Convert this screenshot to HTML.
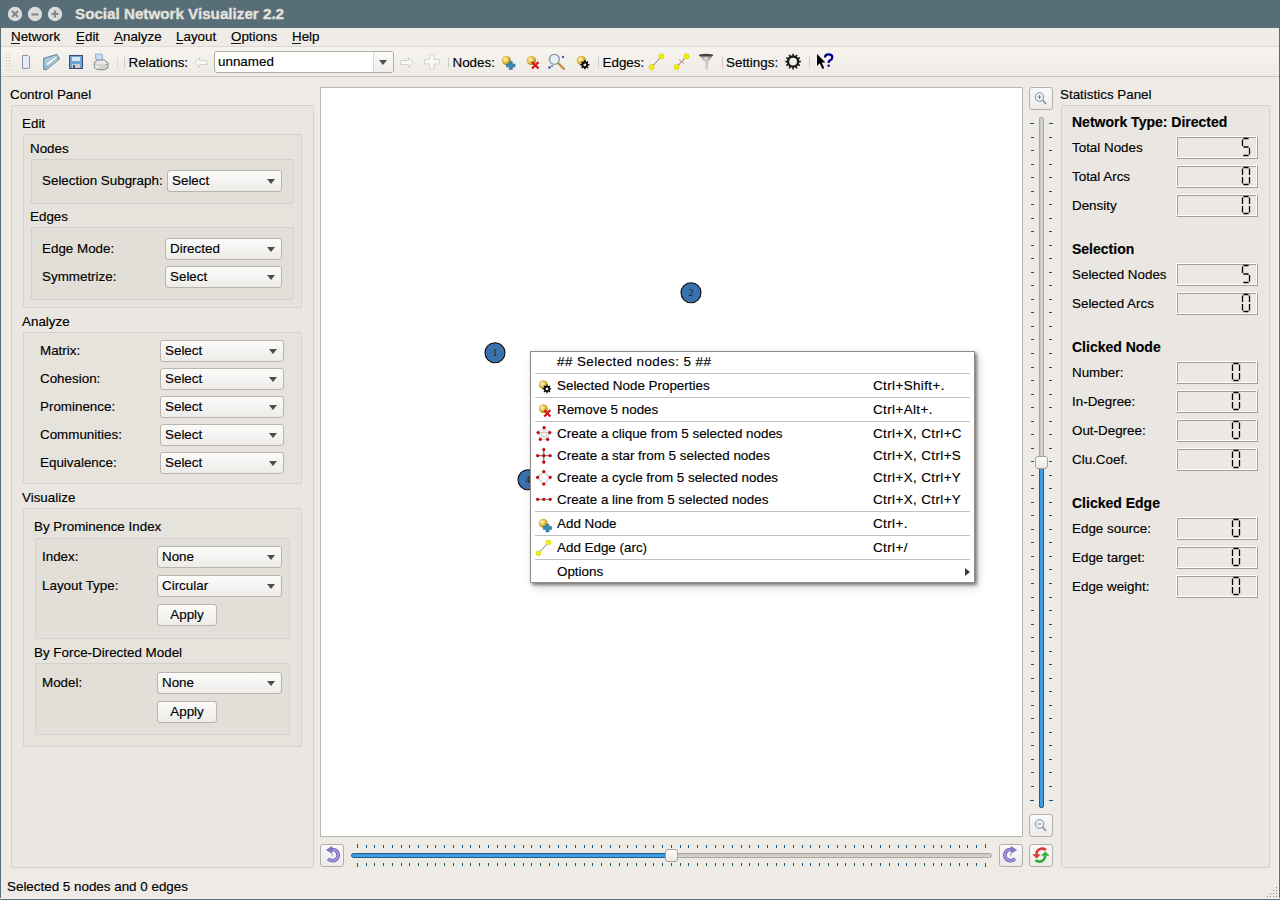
<!DOCTYPE html>
<html><head><meta charset="utf-8">
<style>
*{box-sizing:border-box;margin:0;padding:0}
html,body{width:1280px;height:900px;overflow:hidden}
body{position:relative;background:#eeebe7;font-family:"Liberation Sans",sans-serif;font-size:13.4px;color:#000;-webkit-text-stroke-width:0.15px}
.a{position:absolute}
.t{position:absolute;white-space:nowrap;line-height:16px}
.gb{position:absolute;border:1px solid #d4d0cb;border-radius:2px;background:rgba(60,40,20,0.018)}
.cb{position:absolute;height:22px;border:1px solid #b9b4ae;border-radius:3px;background:linear-gradient(#fbfbfa,#eeece9);padding-left:4px;line-height:19px;white-space:nowrap}
.cb:after{content:"";position:absolute;right:6px;top:8px;border-left:4px solid transparent;border-right:4px solid transparent;border-top:5px solid #4d4d4d}
.btn{position:absolute;height:22px;width:60px;border:1px solid #b9b4ae;border-radius:3px;background:linear-gradient(#fbfbfa,#eeece9);text-align:center;line-height:19px}
.lcd{position:absolute;left:1176px;width:82px;height:23px;border:1px solid;border-color:#fff #a19d98 #a19d98 #fff;box-shadow:inset -1px -1px 0 #fff,inset 1px 1px 0 #a19d98;background:#ece9e5}
.ib{position:absolute;width:24px;height:23px;border:1px solid #b3afa9;border-radius:3px;background:linear-gradient(#fafaf9,#ecebe8)}
</style></head><body>
<!-- title bar -->
<div class="a" style="left:0;top:0;width:1280px;height:28px;background:#576d78"></div>
<div class="t" style="left:75px;top:5px;font-weight:bold;font-size:15.2px;color:#e4e2dc;line-height:18px;-webkit-text-stroke-width:0.35px">Social Network Visualizer 2.2</div>
<!-- window frame -->
<div class="a" style="left:0;top:28px;width:1px;height:872px;background:#576d78"></div>
<div class="a" style="left:1279px;top:28px;width:1px;height:872px;background:#576d78"></div>
<div class="a" style="left:0;top:898px;width:1280px;height:1px;background:#f6f3ef"></div><div class="a" style="left:1278px;top:28px;width:1px;height:871px;background:#f6f3ef"></div><div class="a" style="left:0;top:899px;width:1280px;height:1px;background:#576d78"></div>
<!-- menubar -->
<div class="a" style="left:1px;top:28px;width:1278px;height:18px;background:#efece8"></div>
<div class="a" style="left:1px;top:46px;width:1278px;height:1px;background:#dcd8d3"></div>
<!-- toolbar -->
<div class="a" style="left:1px;top:47px;width:1278px;height:29px;background:linear-gradient(#f7f4f0,#eeebe7)"></div>
<div class="a" style="left:1px;top:76px;width:1278px;height:1px;background:#c9c5c0"></div>

<div id="menu">
<div class="t" style="left:11px;top:29px">Network</div>
<div class="t" style="left:76px;top:29px">Edit</div>
<div class="t" style="left:114px;top:29px">Analyze</div>
<div class="t" style="left:176px;top:29px">Layout</div>
<div class="t" style="left:231px;top:29px">Options</div>
<div class="t" style="left:292px;top:29px">Help</div>
</div>

<!-- control panel -->
<div class="t" style="left:10px;top:87px">Control Panel</div>
<div class="gb" style="left:11px;top:105px;width:303px;height:763px"></div>
<div class="t" style="left:22px;top:116px">Edit</div>
<div class="gb" style="left:23px;top:134px;width:279px;height:174px"></div>
<div class="t" style="left:30px;top:141px">Nodes</div>
<div class="gb" style="left:31px;top:159px;width:263px;height:45px"></div>
<div class="t" style="left:42px;top:173px">Selection Subgraph:</div>
<div class="cb" style="left:167px;top:170px;width:115px">Select</div>
<div class="t" style="left:30px;top:209px">Edges</div>
<div class="gb" style="left:31px;top:227px;width:263px;height:73px"></div>
<div class="t" style="left:42px;top:241px">Edge Mode:</div>
<div class="cb" style="left:165px;top:238px;width:117px">Directed</div>
<div class="t" style="left:42px;top:269px">Symmetrize:</div>
<div class="cb" style="left:165px;top:266px;width:117px">Select</div>

<div class="t" style="left:22px;top:314px">Analyze</div>
<div class="gb" style="left:23px;top:332px;width:279px;height:152px"></div>
<div class="t" style="left:40px;top:343px">Matrix:</div>
<div class="cb" style="left:160px;top:340px;width:124px">Select</div>
<div class="t" style="left:40px;top:371px">Cohesion:</div>
<div class="cb" style="left:160px;top:368px;width:124px">Select</div>
<div class="t" style="left:40px;top:399px">Prominence:</div>
<div class="cb" style="left:160px;top:396px;width:124px">Select</div>
<div class="t" style="left:40px;top:427px">Communities:</div>
<div class="cb" style="left:160px;top:424px;width:124px">Select</div>
<div class="t" style="left:40px;top:455px">Equivalence:</div>
<div class="cb" style="left:160px;top:452px;width:124px">Select</div>

<div class="t" style="left:22px;top:490px">Visualize</div>
<div class="gb" style="left:23px;top:508px;width:279px;height:239px"></div>
<div class="t" style="left:34px;top:519px">By Prominence Index</div>
<div class="gb" style="left:35px;top:538px;width:255px;height:101px"></div>
<div class="t" style="left:42px;top:549px">Index:</div>
<div class="cb" style="left:157px;top:546px;width:125px">None</div>
<div class="t" style="left:42px;top:578px">Layout Type:</div>
<div class="cb" style="left:157px;top:575px;width:125px">Circular</div>
<div class="btn" style="left:157px;top:604px">Apply</div>
<div class="t" style="left:34px;top:645px">By Force-Directed Model</div>
<div class="gb" style="left:35px;top:663px;width:255px;height:72px"></div>
<div class="t" style="left:42px;top:675px">Model:</div>
<div class="cb" style="left:157px;top:672px;width:125px">None</div>
<div class="btn" style="left:157px;top:701px">Apply</div>

<!-- canvas -->
<div class="a" style="left:320px;top:87px;width:703px;height:750px;background:#fff;border:1px solid #b9b5b0"></div>

<!-- statistics panel -->
<div class="t" style="left:1060px;top:87px">Statistics Panel</div>
<div class="gb" style="left:1061px;top:105px;width:209px;height:763px"></div>
<div class="t" style="left:1072px;top:114px;font-weight:bold;font-size:14px">Network Type: Directed</div>
<div class="t" style="left:1072px;top:140px">Total Nodes</div>
<div class="lcd" style="top:136px"></div>
<div class="t" style="left:1072px;top:169px">Total Arcs</div>
<div class="lcd" style="top:165px"></div>
<div class="t" style="left:1072px;top:198px">Density</div>
<div class="lcd" style="top:194px"></div>
<div class="t" style="left:1072px;top:241px;font-weight:bold;font-size:14px">Selection</div>
<div class="t" style="left:1072px;top:267px">Selected Nodes</div>
<div class="lcd" style="top:263px"></div>
<div class="t" style="left:1072px;top:296px">Selected Arcs</div>
<div class="lcd" style="top:292px"></div>
<div class="t" style="left:1072px;top:339px;font-weight:bold;font-size:14px">Clicked Node</div>
<div class="t" style="left:1072px;top:365px">Number:</div>
<div class="lcd" style="top:361px"></div>
<div class="t" style="left:1072px;top:394px">In-Degree:</div>
<div class="lcd" style="top:390px"></div>
<div class="t" style="left:1072px;top:423px">Out-Degree:</div>
<div class="lcd" style="top:419px"></div>
<div class="t" style="left:1072px;top:452px">Clu.Coef.</div>
<div class="lcd" style="top:448px"></div>
<div class="t" style="left:1072px;top:495px;font-weight:bold;font-size:14px">Clicked Edge</div>
<div class="t" style="left:1072px;top:521px">Edge source:</div>
<div class="lcd" style="top:517px"></div>
<div class="t" style="left:1072px;top:550px">Edge target:</div>
<div class="lcd" style="top:546px"></div>
<div class="t" style="left:1072px;top:579px">Edge weight:</div>
<div class="lcd" style="top:575px"></div>

<!-- status -->
<div class="t" style="left:7px;top:879px">Selected 5 nodes and 0 edges</div>


<!-- title buttons -->
<svg class="a" style="left:0;top:0" width="70" height="28">
 <g fill="#dcdcdc"><circle cx="15" cy="14" r="7.2"/><circle cx="35" cy="14" r="7.2"/><circle cx="55" cy="14" r="7.2"/></g>
 <g stroke="#858585" stroke-width="2.1" fill="none"><path d="M12 11 L18 17 M18 11 L12 17"/><path d="M31.5 14.5 H38.5"/><path d="M55 10.5 V17.5 M51.5 14 H58.5"/></g>
</svg>
<!-- toolbar -->
<svg class="a" style="left:0;top:47px" width="1280" height="29">
 <g fill="#c4c0bb"><rect x="6" y="7" width="1" height="1"/><rect x="6" y="10" width="1" height="1"/><rect x="6" y="13" width="1" height="1"/><rect x="6" y="16" width="1" height="1"/><rect x="6" y="19" width="1" height="1"/><rect x="6" y="22" width="1" height="1"/>
 <rect x="9" y="7" width="1" height="1"/><rect x="9" y="10" width="1" height="1"/><rect x="9" y="13" width="1" height="1"/><rect x="9" y="16" width="1" height="1"/><rect x="9" y="19" width="1" height="1"/><rect x="9" y="22" width="1" height="1"/></g>
 <!-- new doc -->
 <path d="M22.5 8.5 H28 L29.5 10 V21 L22.5 21.8 Z" fill="#e6ecfa" stroke="#8d949c"/>
 <!-- open folder -->
 <path d="M43.6 11.3 L56.8 7.4 L58.8 10.3 L59 12.3 L46 22.8 L43.8 22.4 Z" fill="#9ccbe4" stroke="#5b6f7a" stroke-width="0.9"/>
 <path d="M46.3 16.2 L56 9.6 L57.8 10.9 L47.3 19.2 Z" fill="#f6f7f8" stroke="#9aa" stroke-width="0.4"/>
 <path d="M44.6 21.8 L55.5 12.8 L58.8 10.8 L58.9 12.4 L46 22.8 Z" fill="#b3def2" stroke="#5b6f7a" stroke-width="0.6"/>
 <!-- save -->
 <rect x="69.5" y="8.5" width="13" height="13" fill="#6fa3d8" stroke="#3a4a7a"/>
 <rect x="72" y="10" width="8" height="4" fill="#d9e8ea"/>
 <rect x="72" y="17" width="8" height="4" fill="#d0d0d0"/><rect x="73" y="18" width="2" height="3" fill="#555"/>
 <!-- print -->
 <path d="M95.3 7.2 H102 L102.8 13.2 H96 Z" fill="#c6dcfa" stroke="#8c9cc8" stroke-width="0.8"/>
 <path d="M94.3 15.5 L97.5 13 H104.5 L108 15.8 V20.8 L104.5 22.8 H98 L94.3 20.5 Z" fill="#d2d2d2" stroke="#7c7c7c" stroke-width="0.9"/>
 <path d="M95.5 15.6 L98 13.8 H104.2 L106.8 16 V17.3 H95.5 Z" fill="#e8e8e8"/>
 <rect x="95.3" y="19" width="4" height="1.6" fill="#fafafa"/>
 <circle cx="106" cy="17.5" r="0.8" fill="#5cb85c"/>
 <!-- separators -->
 <rect x="117" y="10" width="1" height="11" fill="#dcd9d5"/><rect x="124" y="10" width="1" height="11" fill="#d0ccc7"/>
 <!-- back arrow disabled -->
 <path d="M194.5 15.5 L199.5 10.5 V13.5 H207 V17.5 H199.5 V20.5 Z" fill="#f7f7f7" stroke="#cfcfcf"/>
 <!-- forward arrow disabled -->
 <path d="M413.5 15.5 L408.5 10.5 V13.5 H400.5 V17.5 H408.5 V20.5 Z" fill="#f7f7f7" stroke="#cfcfcf"/>
 <!-- plus disabled -->
 <path d="M429.5 7.5 H434 V12.5 H439.5 V17 H434 V22 H429.5 V17 H424.5 V12.5 H429.5 Z" fill="#f7f7f7" stroke="#d4d4d4"/>
 <rect x="448" y="10" width="1" height="11" fill="#d0ccc7"/>
 <!-- add node -->
 <defs><radialGradient id="ball" cx="0.4" cy="0.4" r="0.6"><stop offset="0" stop-color="#fffbe0"/><stop offset="0.4" stop-color="#ecd060"/><stop offset="0.85" stop-color="#c89a20"/><stop offset="1" stop-color="#9c7410"/></radialGradient>
 <linearGradient id="funnel" x1="0" x2="1"><stop offset="0" stop-color="#7a7a7a"/><stop offset="0.5" stop-color="#d8d8d8"/><stop offset="1" stop-color="#6a6a6a"/></linearGradient></defs>
 <circle cx="506.3" cy="13.5" r="4.6" fill="url(#ball)"/>
 <path d="M509.3 14.5 H512.3 V17 H515 V20 H512.3 V22.5 H509.3 V20 H506.5 V17 H509.3 Z" fill="#3a8ab8" stroke="#2a6a90" stroke-width="0.6"/>
 <!-- remove node -->
 <circle cx="531.3" cy="13.5" r="4.6" fill="url(#ball)"/>
 <path d="M532 15 L538.5 21.5 M538.5 15 L532 21.5" stroke="#d81818" stroke-width="2.4"/>
 <!-- find node -->
 <circle cx="554.4" cy="12.3" r="5" fill="#e4eef4" stroke="#8c98a4" stroke-width="1.3"/>
 <path d="M558.5 16.5 L564 22" stroke="#c09040" stroke-width="2.4" stroke-linecap="round"/>
 <circle cx="549.5" cy="20.5" r="1.3" fill="#3a5ab0"/><circle cx="552" cy="19" r="0.9" fill="#3a5ab0"/><circle cx="563" cy="10" r="1.2" fill="#3a5ab0"/>
 <!-- node properties -->
 <circle cx="581.3" cy="13.5" r="4.6" fill="url(#ball)"/>
 <path d="M588.02 17.09 L589.34 17.06 L589.34 18.54 L588.02 18.51 L587.58 19.58 L588.53 20.49 L587.49 21.53 L586.58 20.58 L585.51 21.02 L585.54 22.34 L584.06 22.34 L584.09 21.02 L583.02 20.58 L582.11 21.53 L581.07 20.49 L582.02 19.58 L581.58 18.51 L580.26 18.54 L580.26 17.06 L581.58 17.09 L582.02 16.02 L581.07 15.11 L582.11 14.07 L583.02 15.02 L584.09 14.58 L584.06 13.26 L585.54 13.26 L585.51 14.58 L586.58 15.02 L587.49 14.07 L588.53 15.11 L587.58 16.02 Z M586.30 17.80 A1.5 1.5 0 1 0 583.30 17.80 A1.5 1.5 0 1 0 586.30 17.80 Z" fill="#000" fill-rule="evenodd"/>
 <rect x="598" y="10" width="1" height="11" fill="#d0ccc7"/>
 <!-- add edge -->
 <path d="M651.6 20.1 L661.5 9.4" stroke="#444" stroke-width="1" stroke-dasharray="2 1"/>
 <circle cx="651.6" cy="20.1" r="2.6" fill="#f4f000" stroke="#c8c000" stroke-width="0.5"/><circle cx="661.5" cy="9.4" r="2.6" fill="#f4f000" stroke="#c8c000" stroke-width="0.5"/>
 <!-- remove edge -->
 <path d="M676.6 20.1 L686.5 9.4" stroke="#444" stroke-width="1" stroke-dasharray="2 1"/>
 <path d="M679 12.5 L684 16.5" stroke="#f05050" stroke-width="0.8"/>
 <circle cx="676.6" cy="20.1" r="2.6" fill="#f4f000" stroke="#c8c000" stroke-width="0.5"/><circle cx="686.5" cy="9.4" r="2.6" fill="#f4f000" stroke="#c8c000" stroke-width="0.5"/>
 <!-- funnel -->
 <path d="M698.8 8 Q706 6 713.3 8 L708 15 V21.5 L705 22.5 V15 Z" fill="url(#funnel)"/>
 <ellipse cx="706" cy="8.2" rx="7.2" ry="1.4" fill="#444"/>
 <rect x="722" y="10" width="1" height="11" fill="#d0ccc7"/>
 <!-- gear -->
 <path d="M799.25 13.79 L800.96 13.83 L800.96 15.37 L799.25 15.41 L798.83 16.97 L800.30 17.86 L799.52 19.20 L798.02 18.37 L796.87 19.52 L797.70 21.02 L796.36 21.80 L795.47 20.33 L793.91 20.75 L793.87 22.46 L792.33 22.46 L792.29 20.75 L790.73 20.33 L789.84 21.80 L788.50 21.02 L789.33 19.52 L788.18 18.37 L786.68 19.20 L785.90 17.86 L787.37 16.97 L786.95 15.41 L785.24 15.37 L785.24 13.83 L786.95 13.79 L787.37 12.23 L785.90 11.34 L786.68 10.00 L788.18 10.83 L789.33 9.68 L788.50 8.18 L789.84 7.40 L790.73 8.87 L792.29 8.45 L792.33 6.74 L793.87 6.74 L793.91 8.45 L795.47 8.87 L796.36 7.40 L797.70 8.18 L796.87 9.68 L798.02 10.83 L799.52 10.00 L800.30 11.34 L798.83 12.23 Z M797.00 14.60 A3.9 3.9 0 1 0 789.20 14.60 A3.9 3.9 0 1 0 797.00 14.60 Z" fill="#1a1a1a" fill-rule="evenodd"/>
 <rect x="809" y="10" width="1" height="11" fill="#d0ccc7"/>
 <!-- whats this -->
 <path d="M817 7 V19 L819.8 16.3 L822.3 22 L824.2 21.1 L821.8 15.6 H825.5 Z" fill="#000"/>
 <path d="M825 10.5 Q825 7.3 828.5 7.3 Q832.3 7.3 832.3 10.3 Q832.3 12.3 829.8 13.5 Q828.6 14.2 828.6 16" fill="none" stroke="#00008b" stroke-width="2.2"/>
 <rect x="827.4" y="17.7" width="2.4" height="2" fill="#00008b"/>
</svg>
<div class="t" style="left:128.5px;top:54.5px">Relations:</div>
<div class="a" style="left:214px;top:51px;width:180px;height:22px;border:1px solid #b2ada7;border-radius:3px;background:#fff"></div>
<div class="a" style="left:373px;top:52px;width:1px;height:20px;background:#d8d4cf"></div>
<div class="a" style="left:374px;top:52px;width:19px;height:20px;background:linear-gradient(#fbfbfa,#efedea);border-radius:0 2px 2px 0"></div>
<div class="a" style="left:379px;top:60px;border-left:4px solid transparent;border-right:4px solid transparent;border-top:5px solid #4d4d4d"></div>
<div class="t" style="left:218px;top:54px">unnamed</div>
<div class="t" style="left:452.5px;top:54.5px">Nodes:</div>
<div class="t" style="left:602.5px;top:54.5px">Edges:</div>
<div class="t" style="left:726px;top:54.5px">Settings:</div>

<!-- canvas nodes -->
<svg class="a" style="left:321px;top:88px" width="701" height="748">
 <g fill="#3a72ae" stroke="#0a0a0a" stroke-width="1.1">
 <circle cx="174" cy="264.8" r="10"/><circle cx="370" cy="204.8" r="10"/><circle cx="207" cy="391.8" r="10"/></g>
 <g font-family="Liberation Serif" font-size="10" fill="#222" text-anchor="middle"><text x="174" y="268.3">1</text><text x="370" y="208.3">2</text><text x="207" y="395.3">4</text></g>
</svg>
<!-- vertical slider -->
<div class="ib" style="left:1029px;top:87px"></div>
<svg class="a" style="left:1029px;top:87px" width="23" height="23"><circle cx="10.5" cy="10" r="4.3" fill="#eef4fa" stroke="#7a8ca0" stroke-width="1"/><path d="M10.5 8 V12 M8.5 10 H12.5" stroke="#6a7c90" stroke-width="0.9"/><path d="M13.5 13 L17 17" stroke="#8a8a8a" stroke-width="1.5"/></svg>
<div class="ib" style="left:1029px;top:814px"></div>
<svg class="a" style="left:1029px;top:814px" width="23" height="23"><circle cx="10.5" cy="10" r="4.3" fill="#eef4fa" stroke="#7a8ca0" stroke-width="1"/><path d="M8.5 10 H12.5" stroke="#6a7c90" stroke-width="0.9"/><path d="M13.5 13 L17 17" stroke="#8a8a8a" stroke-width="1.5"/></svg>
<svg class="a" style="left:1030px;top:0" width="24" height="900" fill="#17557f"><rect x="0" y="123" width="4" height="1"/><rect x="19" y="123" width="4" height="1"/><rect x="1" y="137" width="3" height="1"/><rect x="19" y="137" width="3" height="1"/><rect x="1" y="150" width="3" height="1"/><rect x="19" y="150" width="3" height="1"/><rect x="1" y="164" width="3" height="1"/><rect x="19" y="164" width="3" height="1"/><rect x="1" y="177" width="3" height="1"/><rect x="19" y="177" width="3" height="1"/><rect x="1" y="191" width="3" height="1"/><rect x="19" y="191" width="3" height="1"/><rect x="1" y="204" width="3" height="1"/><rect x="19" y="204" width="3" height="1"/><rect x="1" y="218" width="3" height="1"/><rect x="19" y="218" width="3" height="1"/><rect x="1" y="231" width="3" height="1"/><rect x="19" y="231" width="3" height="1"/><rect x="1" y="245" width="3" height="1"/><rect x="19" y="245" width="3" height="1"/><rect x="1" y="258" width="3" height="1"/><rect x="19" y="258" width="3" height="1"/><rect x="1" y="272" width="3" height="1"/><rect x="19" y="272" width="3" height="1"/><rect x="1" y="285" width="3" height="1"/><rect x="19" y="285" width="3" height="1"/><rect x="1" y="299" width="3" height="1"/><rect x="19" y="299" width="3" height="1"/><rect x="1" y="312" width="3" height="1"/><rect x="19" y="312" width="3" height="1"/><rect x="1" y="326" width="3" height="1"/><rect x="19" y="326" width="3" height="1"/><rect x="1" y="339" width="3" height="1"/><rect x="19" y="339" width="3" height="1"/><rect x="1" y="353" width="3" height="1"/><rect x="19" y="353" width="3" height="1"/><rect x="1" y="367" width="3" height="1"/><rect x="19" y="367" width="3" height="1"/><rect x="1" y="380" width="3" height="1"/><rect x="19" y="380" width="3" height="1"/><rect x="1" y="394" width="3" height="1"/><rect x="19" y="394" width="3" height="1"/><rect x="1" y="407" width="3" height="1"/><rect x="19" y="407" width="3" height="1"/><rect x="1" y="421" width="3" height="1"/><rect x="19" y="421" width="3" height="1"/><rect x="1" y="434" width="3" height="1"/><rect x="19" y="434" width="3" height="1"/><rect x="1" y="448" width="3" height="1"/><rect x="19" y="448" width="3" height="1"/><rect x="1" y="461" width="3" height="1"/><rect x="19" y="461" width="3" height="1"/><rect x="1" y="475" width="3" height="1"/><rect x="19" y="475" width="3" height="1"/><rect x="1" y="488" width="3" height="1"/><rect x="19" y="488" width="3" height="1"/><rect x="1" y="502" width="3" height="1"/><rect x="19" y="502" width="3" height="1"/><rect x="1" y="515" width="3" height="1"/><rect x="19" y="515" width="3" height="1"/><rect x="1" y="529" width="3" height="1"/><rect x="19" y="529" width="3" height="1"/><rect x="1" y="542" width="3" height="1"/><rect x="19" y="542" width="3" height="1"/><rect x="1" y="556" width="3" height="1"/><rect x="19" y="556" width="3" height="1"/><rect x="1" y="569" width="3" height="1"/><rect x="19" y="569" width="3" height="1"/><rect x="1" y="583" width="3" height="1"/><rect x="19" y="583" width="3" height="1"/><rect x="1" y="597" width="3" height="1"/><rect x="19" y="597" width="3" height="1"/><rect x="1" y="610" width="3" height="1"/><rect x="19" y="610" width="3" height="1"/><rect x="1" y="624" width="3" height="1"/><rect x="19" y="624" width="3" height="1"/><rect x="1" y="637" width="3" height="1"/><rect x="19" y="637" width="3" height="1"/><rect x="1" y="651" width="3" height="1"/><rect x="19" y="651" width="3" height="1"/><rect x="1" y="664" width="3" height="1"/><rect x="19" y="664" width="3" height="1"/><rect x="1" y="678" width="3" height="1"/><rect x="19" y="678" width="3" height="1"/><rect x="1" y="691" width="3" height="1"/><rect x="19" y="691" width="3" height="1"/><rect x="1" y="705" width="3" height="1"/><rect x="19" y="705" width="3" height="1"/><rect x="1" y="718" width="3" height="1"/><rect x="19" y="718" width="3" height="1"/><rect x="1" y="732" width="3" height="1"/><rect x="19" y="732" width="3" height="1"/><rect x="1" y="745" width="3" height="1"/><rect x="19" y="745" width="3" height="1"/><rect x="1" y="759" width="3" height="1"/><rect x="19" y="759" width="3" height="1"/><rect x="1" y="772" width="3" height="1"/><rect x="19" y="772" width="3" height="1"/><rect x="1" y="786" width="3" height="1"/><rect x="19" y="786" width="3" height="1"/><rect x="0" y="800" width="4" height="1"/><rect x="19" y="800" width="4" height="1"/></svg>
<div class="a" style="left:1039px;top:117px;width:5px;height:345px;background:linear-gradient(90deg,#c8c4bf,#dcd9d5);border:1px solid #a9a5a0;border-radius:2px 2px 0 0"></div>
<div class="a" style="left:1039px;top:462px;width:5px;height:346px;background:#3f9de0;border:1px solid #1f5d8c;border-radius:0 0 2px 2px"></div>
<div class="a" style="left:1035px;top:456px;width:13px;height:13px;border:1px solid #a7a29c;border-radius:3px;background:linear-gradient(#ffffff,#e9e7e4)"></div>
<!-- horizontal slider -->
<div class="ib" style="left:320px;top:844px"></div>
<div class="ib" style="left:999px;top:844px"></div>
<div class="ib" style="left:1029px;top:844px"></div>
<svg class="a" style="left:320.5px;top:844px" width="23" height="23"><path d="M10.3 5.6 A5.6 5.6 0 1 1 7.2 14.6" fill="none" stroke="#6a58b0" stroke-width="3.6"/><path d="M10.3 5.6 A5.6 5.6 0 1 1 7.2 14.6" fill="none" stroke="#a898e0" stroke-width="2"/><path d="M10.8 2.5 L5.5 6 L10.8 9.3 Z" fill="#8c78d0" stroke="#6a58b0" stroke-width="0.6"/><circle cx="11.3" cy="10.8" r="0.8" fill="#8c78d0"/></svg>
<svg class="a" style="left:999px;top:844px" width="23" height="23"><path d="M12.7 5.6 A5.6 5.6 0 1 0 15.8 14.6" fill="none" stroke="#6a58b0" stroke-width="3.6"/><path d="M12.7 5.6 A5.6 5.6 0 1 0 15.8 14.6" fill="none" stroke="#a898e0" stroke-width="2"/><path d="M12.2 2.5 L17.5 6 L12.2 9.3 Z" fill="#8c78d0" stroke="#6a58b0" stroke-width="0.6"/><circle cx="11.7" cy="10.8" r="0.8" fill="#8c78d0"/></svg>
<svg class="a" style="left:1029px;top:844px" width="23" height="23">
 <path d="M17 5.8 Q12.5 3.2 9 6.2 Q7.3 8 7.5 10.5" fill="none" stroke="#d83a3a" stroke-width="2.6"/><path d="M3.3 10.3 L11.8 10.3 L7.6 14.6 Z" fill="#d83a3a"/>
 <path d="M6.5 16.3 Q11 19 14.5 16 Q16.3 14 16.2 11.5" fill="none" stroke="#30b030" stroke-width="2.6"/><path d="M12 11.8 L20.5 11.8 L16.3 7.4 Z" fill="#30b030"/>
</svg>
<svg class="a" style="left:0;top:844px" width="1280" height="24" fill="#17557f"><rect x="357" y="0" width="1" height="4"/><rect x="366" y="1" width="1" height="3"/><rect x="374" y="1" width="1" height="3"/><rect x="383" y="1" width="1" height="3"/><rect x="392" y="1" width="1" height="3"/><rect x="401" y="1" width="1" height="3"/><rect x="409" y="1" width="1" height="3"/><rect x="418" y="1" width="1" height="3"/><rect x="427" y="1" width="1" height="3"/><rect x="435" y="1" width="1" height="3"/><rect x="444" y="1" width="1" height="3"/><rect x="453" y="1" width="1" height="3"/><rect x="462" y="1" width="1" height="3"/><rect x="470" y="1" width="1" height="3"/><rect x="479" y="1" width="1" height="3"/><rect x="488" y="1" width="1" height="3"/><rect x="497" y="1" width="1" height="3"/><rect x="505" y="1" width="1" height="3"/><rect x="514" y="1" width="1" height="3"/><rect x="523" y="1" width="1" height="3"/><rect x="531" y="1" width="1" height="3"/><rect x="540" y="1" width="1" height="3"/><rect x="549" y="1" width="1" height="3"/><rect x="558" y="1" width="1" height="3"/><rect x="566" y="1" width="1" height="3"/><rect x="575" y="1" width="1" height="3"/><rect x="584" y="1" width="1" height="3"/><rect x="592" y="1" width="1" height="3"/><rect x="601" y="1" width="1" height="3"/><rect x="610" y="1" width="1" height="3"/><rect x="619" y="1" width="1" height="3"/><rect x="627" y="1" width="1" height="3"/><rect x="636" y="1" width="1" height="3"/><rect x="645" y="1" width="1" height="3"/><rect x="653" y="1" width="1" height="3"/><rect x="662" y="1" width="1" height="3"/><rect x="671" y="1" width="1" height="3"/><rect x="680" y="1" width="1" height="3"/><rect x="688" y="1" width="1" height="3"/><rect x="697" y="1" width="1" height="3"/><rect x="706" y="1" width="1" height="3"/><rect x="715" y="1" width="1" height="3"/><rect x="723" y="1" width="1" height="3"/><rect x="732" y="1" width="1" height="3"/><rect x="741" y="1" width="1" height="3"/><rect x="749" y="1" width="1" height="3"/><rect x="758" y="1" width="1" height="3"/><rect x="767" y="1" width="1" height="3"/><rect x="776" y="1" width="1" height="3"/><rect x="784" y="1" width="1" height="3"/><rect x="793" y="1" width="1" height="3"/><rect x="802" y="1" width="1" height="3"/><rect x="810" y="1" width="1" height="3"/><rect x="819" y="1" width="1" height="3"/><rect x="828" y="1" width="1" height="3"/><rect x="837" y="1" width="1" height="3"/><rect x="845" y="1" width="1" height="3"/><rect x="854" y="1" width="1" height="3"/><rect x="863" y="1" width="1" height="3"/><rect x="871" y="1" width="1" height="3"/><rect x="880" y="1" width="1" height="3"/><rect x="889" y="1" width="1" height="3"/><rect x="898" y="1" width="1" height="3"/><rect x="906" y="1" width="1" height="3"/><rect x="915" y="1" width="1" height="3"/><rect x="924" y="1" width="1" height="3"/><rect x="933" y="1" width="1" height="3"/><rect x="941" y="1" width="1" height="3"/><rect x="950" y="1" width="1" height="3"/><rect x="959" y="1" width="1" height="3"/><rect x="967" y="1" width="1" height="3"/><rect x="976" y="1" width="1" height="3"/><rect x="985" y="0" width="1" height="4"/><rect x="357" y="19" width="1" height="4"/><rect x="366" y="19" width="1" height="3"/><rect x="374" y="19" width="1" height="3"/><rect x="383" y="19" width="1" height="3"/><rect x="392" y="19" width="1" height="3"/><rect x="401" y="19" width="1" height="3"/><rect x="409" y="19" width="1" height="3"/><rect x="418" y="19" width="1" height="3"/><rect x="427" y="19" width="1" height="3"/><rect x="435" y="19" width="1" height="3"/><rect x="444" y="19" width="1" height="3"/><rect x="453" y="19" width="1" height="3"/><rect x="462" y="19" width="1" height="3"/><rect x="470" y="19" width="1" height="3"/><rect x="479" y="19" width="1" height="3"/><rect x="488" y="19" width="1" height="3"/><rect x="497" y="19" width="1" height="3"/><rect x="505" y="19" width="1" height="3"/><rect x="514" y="19" width="1" height="3"/><rect x="523" y="19" width="1" height="3"/><rect x="531" y="19" width="1" height="3"/><rect x="540" y="19" width="1" height="3"/><rect x="549" y="19" width="1" height="3"/><rect x="558" y="19" width="1" height="3"/><rect x="566" y="19" width="1" height="3"/><rect x="575" y="19" width="1" height="3"/><rect x="584" y="19" width="1" height="3"/><rect x="592" y="19" width="1" height="3"/><rect x="601" y="19" width="1" height="3"/><rect x="610" y="19" width="1" height="3"/><rect x="619" y="19" width="1" height="3"/><rect x="627" y="19" width="1" height="3"/><rect x="636" y="19" width="1" height="3"/><rect x="645" y="19" width="1" height="3"/><rect x="653" y="19" width="1" height="3"/><rect x="662" y="19" width="1" height="3"/><rect x="671" y="19" width="1" height="3"/><rect x="680" y="19" width="1" height="3"/><rect x="688" y="19" width="1" height="3"/><rect x="697" y="19" width="1" height="3"/><rect x="706" y="19" width="1" height="3"/><rect x="715" y="19" width="1" height="3"/><rect x="723" y="19" width="1" height="3"/><rect x="732" y="19" width="1" height="3"/><rect x="741" y="19" width="1" height="3"/><rect x="749" y="19" width="1" height="3"/><rect x="758" y="19" width="1" height="3"/><rect x="767" y="19" width="1" height="3"/><rect x="776" y="19" width="1" height="3"/><rect x="784" y="19" width="1" height="3"/><rect x="793" y="19" width="1" height="3"/><rect x="802" y="19" width="1" height="3"/><rect x="810" y="19" width="1" height="3"/><rect x="819" y="19" width="1" height="3"/><rect x="828" y="19" width="1" height="3"/><rect x="837" y="19" width="1" height="3"/><rect x="845" y="19" width="1" height="3"/><rect x="854" y="19" width="1" height="3"/><rect x="863" y="19" width="1" height="3"/><rect x="871" y="19" width="1" height="3"/><rect x="880" y="19" width="1" height="3"/><rect x="889" y="19" width="1" height="3"/><rect x="898" y="19" width="1" height="3"/><rect x="906" y="19" width="1" height="3"/><rect x="915" y="19" width="1" height="3"/><rect x="924" y="19" width="1" height="3"/><rect x="933" y="19" width="1" height="3"/><rect x="941" y="19" width="1" height="3"/><rect x="950" y="19" width="1" height="3"/><rect x="959" y="19" width="1" height="3"/><rect x="967" y="19" width="1" height="3"/><rect x="976" y="19" width="1" height="3"/><rect x="985" y="19" width="1" height="4"/></svg>
<div class="a" style="left:351px;top:853px;width:320px;height:5px;background:#3f9de0;border:1px solid #1f5d8c;border-radius:3px 0 0 3px"></div>
<div class="a" style="left:671px;top:853px;width:321px;height:5px;background:linear-gradient(#c8c4bf,#dcd9d5);border:1px solid #a9a5a0;border-radius:0 3px 3px 0"></div>
<div class="a" style="left:665px;top:849px;width:13px;height:13px;border:1px solid #a7a29c;border-radius:3px;background:linear-gradient(#ffffff,#e9e7e4)"></div>

<!-- context menu -->
<div class="a" style="left:530px;top:351px;width:445px;height:232px;box-shadow:2px 2px 3px rgba(0,0,0,0.45),3px 4px 9px rgba(0,0,0,0.18)"></div>
<div class="a" style="left:530px;top:351px;width:445px;height:232px;background:#fff;border:1px solid #8f8b86"></div>
<div class="a" style="left:535px;top:373px;width:435px;height:1px;background:#c2c2c2"></div>
<div class="a" style="left:535px;top:397px;width:435px;height:1px;background:#c2c2c2"></div>
<div class="a" style="left:535px;top:421px;width:435px;height:1px;background:#c2c2c2"></div>
<div class="a" style="left:535px;top:511px;width:435px;height:1px;background:#c2c2c2"></div>
<div class="a" style="left:535px;top:535px;width:435px;height:1px;background:#c2c2c2"></div>
<div class="a" style="left:535px;top:559px;width:435px;height:1px;background:#c2c2c2"></div>
<div class="t" style="left:557px;top:354px;letter-spacing:0.43px">## Selected nodes: 5 ##</div>
<div class="t" style="left:557px;top:378px">Selected Node Properties</div>
<div class="t" style="left:873px;top:378px;letter-spacing:0.4px">Ctrl+Shift+.</div>
<div class="t" style="left:557px;top:402px">Remove 5 nodes</div>
<div class="t" style="left:873px;top:402px;letter-spacing:0.4px">Ctrl+Alt+.</div>
<div class="t" style="left:557px;top:426px">Create a clique from 5 selected nodes</div>
<div class="t" style="left:873px;top:426px;letter-spacing:0.4px">Ctrl+X, Ctrl+C</div>
<div class="t" style="left:557px;top:448px">Create a star from 5 selected nodes</div>
<div class="t" style="left:873px;top:448px;letter-spacing:0.4px">Ctrl+X, Ctrl+S</div>
<div class="t" style="left:557px;top:470px">Create a cycle from 5 selected nodes</div>
<div class="t" style="left:873px;top:470px;letter-spacing:0.4px">Ctrl+X, Ctrl+Y</div>
<div class="t" style="left:557px;top:492px">Create a line from 5 selected nodes</div>
<div class="t" style="left:873px;top:492px;letter-spacing:0.4px">Ctrl+X, Ctrl+Y</div>
<div class="t" style="left:557px;top:516px">Add Node</div>
<div class="t" style="left:873px;top:516px;letter-spacing:0.4px">Ctrl+.</div>
<div class="t" style="left:557px;top:540px">Add Edge (arc)</div>
<div class="t" style="left:873px;top:540px;letter-spacing:0.4px">Ctrl+/</div>
<div class="t" style="left:557px;top:564px">Options</div>
<div class="a" style="left:965px;top:568px;border-top:4.5px solid transparent;border-bottom:4.5px solid transparent;border-left:5px solid #3a3a3a"></div>
<svg class="a" style="left:530px;top:351px" width="30" height="232">
 <defs><radialGradient id="ball2" cx="0.4" cy="0.4" r="0.6"><stop offset="0" stop-color="#fffbe0"/><stop offset="0.4" stop-color="#ecd060"/><stop offset="0.85" stop-color="#c89a20"/><stop offset="1" stop-color="#9c7410"/></radialGradient></defs>
 <circle cx="13.3" cy="33.7" r="4.4" fill="url(#ball2)"/>
 <path d="M20.03 37.24 L21.24 37.21 L21.24 38.59 L20.03 38.56 L19.61 39.57 L20.49 40.41 L19.51 41.39 L18.67 40.51 L17.66 40.93 L17.69 42.14 L16.31 42.14 L16.34 40.93 L15.33 40.51 L14.49 41.39 L13.51 40.41 L14.39 39.57 L13.97 38.56 L12.76 38.59 L12.76 37.21 L13.97 37.24 L14.39 36.23 L13.51 35.39 L14.49 34.41 L15.33 35.29 L16.34 34.87 L16.31 33.66 L17.69 33.66 L17.66 34.87 L18.67 35.29 L19.51 34.41 L20.49 35.39 L19.61 36.23 Z M18.40 37.90 A1.4 1.4 0 1 0 15.60 37.90 A1.4 1.4 0 1 0 18.40 37.90 Z" fill="#000" fill-rule="evenodd"/>
 <circle cx="13.3" cy="57.6" r="4.4" fill="url(#ball2)"/>
 <path d="M14.3 59 L20.3 65.5 M20.3 59 L14.3 65.5" stroke="#d81818" stroke-width="2.3"/>
 <!-- clique -->
 <g stroke="#b8b8b8" stroke-width="0.7" fill="none"><path d="M14.1 76.6 L19.8 81.6 L17.7 88.4 L10.3 88.4 L8.1 81.6 Z M14.1 76.6 L17.7 88.4 L8.1 81.6 L19.8 81.6 L10.3 88.4 Z"/></g>
 <g fill="#e00000" stroke="#800" stroke-width="0.4"><circle cx="14.1" cy="76.6" r="1.4"/><circle cx="8.1" cy="81.6" r="1.4"/><circle cx="19.8" cy="81.6" r="1.4"/><circle cx="10.3" cy="88.4" r="1.4"/><circle cx="17.7" cy="88.4" r="1.4"/></g>
 <!-- star -->
 <path d="M13.8 98.6 V111.2 M7.6 104.7 H20.2" stroke="#333" stroke-width="0.8"/>
 <g fill="#e00000" stroke="#800" stroke-width="0.4"><circle cx="13.8" cy="104.7" r="1.4"/><circle cx="13.8" cy="98.6" r="1.4"/><circle cx="13.8" cy="111.2" r="1.4"/><circle cx="7.6" cy="104.7" r="1.4"/><circle cx="20.2" cy="104.7" r="1.4"/></g>
 <!-- cycle -->
 <path d="M13.8 120.7 L20.2 126.4 L13.8 133.1 L7.6 126.4 Z" stroke="#999" stroke-width="0.8" fill="none"/>
 <g fill="#e00000" stroke="#800" stroke-width="0.4"><circle cx="13.8" cy="120.7" r="1.4"/><circle cx="20.2" cy="126.4" r="1.4"/><circle cx="13.8" cy="133.1" r="1.4"/><circle cx="7.6" cy="126.4" r="1.4"/></g>
 <!-- line -->
 <path d="M7.6 148.4 H20.2" stroke="#555" stroke-width="0.8"/>
 <g fill="#e00000" stroke="#800" stroke-width="0.4"><circle cx="7.6" cy="148.4" r="1.4"/><circle cx="13.8" cy="148.4" r="1.4"/><circle cx="20.2" cy="148.4" r="1.4"/></g>
 <!-- add node -->
 <circle cx="13.2" cy="172.1" r="4.4" fill="url(#ball2)"/>
 <path d="M16 173.3 H19 V175.6 H21.7 V178.6 H19 V181 H16 V178.6 H13.3 V175.6 H16 Z" fill="#3a8ab8" stroke="#2a6a90" stroke-width="0.6"/>
 <!-- add edge -->
 <path d="M8.5 202.3 L18.5 191.5" stroke="#444" stroke-width="1" stroke-dasharray="2 1"/>
 <circle cx="8.5" cy="202.3" r="2.4" fill="#f4f000" stroke="#c8c000" stroke-width="0.5"/><circle cx="18.5" cy="191.5" r="2.4" fill="#f4f000" stroke="#c8c000" stroke-width="0.5"/>
</svg>
<svg class="a" style="left:0;top:0" width="1280" height="900"><path d="M1243.40 138.50 H1248.60 M1242.50 139.40 V146.10 M1243.40 147.00 H1248.60 M1249.50 147.90 V154.60 M1243.40 155.50 H1248.60 M1243.40 167.50 H1248.60 M1249.50 168.40 V175.10 M1249.50 176.90 V183.60 M1243.40 184.50 H1248.60 M1242.50 176.90 V183.60 M1242.50 168.40 V175.10 M1243.40 196.50 H1248.60 M1249.50 197.40 V204.10 M1249.50 205.90 V212.60 M1243.40 213.50 H1248.60 M1242.50 205.90 V212.60 M1242.50 197.40 V204.10 M1243.40 265.50 H1248.60 M1242.50 266.40 V273.10 M1243.40 274.00 H1248.60 M1249.50 274.90 V281.60 M1243.40 282.50 H1248.60 M1243.40 294.50 H1248.60 M1249.50 295.40 V302.10 M1249.50 303.90 V310.60 M1243.40 311.50 H1248.60 M1242.50 303.90 V310.60 M1242.50 295.40 V302.10 M1233.40 363.50 H1238.60 M1239.50 364.40 V371.10 M1239.50 372.90 V379.60 M1233.40 380.50 H1238.60 M1232.50 372.90 V379.60 M1232.50 364.40 V371.10 M1233.40 392.50 H1238.60 M1239.50 393.40 V400.10 M1239.50 401.90 V408.60 M1233.40 409.50 H1238.60 M1232.50 401.90 V408.60 M1232.50 393.40 V400.10 M1233.40 421.50 H1238.60 M1239.50 422.40 V429.10 M1239.50 430.90 V437.60 M1233.40 438.50 H1238.60 M1232.50 430.90 V437.60 M1232.50 422.40 V429.10 M1233.40 450.50 H1238.60 M1239.50 451.40 V458.10 M1239.50 459.90 V466.60 M1233.40 467.50 H1238.60 M1232.50 459.90 V466.60 M1232.50 451.40 V458.10 M1233.40 519.50 H1238.60 M1239.50 520.40 V527.10 M1239.50 528.90 V535.60 M1233.40 536.50 H1238.60 M1232.50 528.90 V535.60 M1232.50 520.40 V527.10 M1233.40 548.50 H1238.60 M1239.50 549.40 V556.10 M1239.50 557.90 V564.60 M1233.40 565.50 H1238.60 M1232.50 557.90 V564.60 M1232.50 549.40 V556.10 M1233.40 577.50 H1238.60 M1239.50 578.40 V585.10 M1239.50 586.90 V593.60 M1233.40 594.50 H1238.60 M1232.50 586.90 V593.60 M1232.50 578.40 V585.10" stroke="#000" stroke-width="1.3" fill="none"/></svg>
<div class="a" style="left:11px;top:43px;width:9px;height:1px;background:#1c1c1c"></div>
<div class="a" style="left:76px;top:43px;width:8px;height:1px;background:#1c1c1c"></div>
<div class="a" style="left:114px;top:43px;width:9px;height:1px;background:#1c1c1c"></div>
<div class="a" style="left:176px;top:43px;width:7px;height:1px;background:#1c1c1c"></div>
<div class="a" style="left:231px;top:43px;width:10px;height:1px;background:#1c1c1c"></div>
<div class="a" style="left:292px;top:43px;width:9px;height:1px;background:#1c1c1c"></div>
<svg class="a" style="left:0;top:0" width="1280" height="900" fill="#8c8a86"><rect x="1276" y="896" width="1" height="1"/><rect x="1273" y="896" width="1" height="1"/><rect x="1270" y="896" width="1" height="1"/><rect x="1267" y="896" width="1" height="1"/><rect x="1276" y="893" width="1" height="1"/><rect x="1273" y="893" width="1" height="1"/><rect x="1270" y="893" width="1" height="1"/><rect x="1276" y="890" width="1" height="1"/><rect x="1273" y="890" width="1" height="1"/><rect x="1276" y="887" width="1" height="1"/></svg>
</body></html>
